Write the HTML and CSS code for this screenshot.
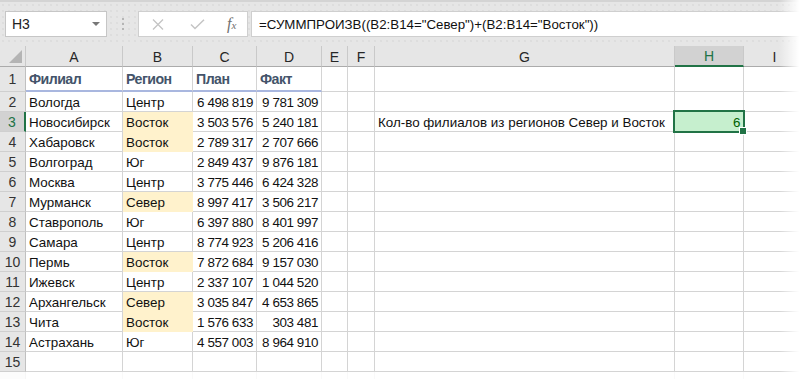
FILE: index.html
```html
<!DOCTYPE html>
<html lang="ru">
<head>
<meta charset="utf-8">
<title>Excel</title>
<link rel="stylesheet" href="styles.css">
</head>
<body>
<div class="app">
  <div class="toolbar">
    <div class="namebox"><span class="nb-text">H3</span><span class="nb-arrow"></span></div>
    <div class="sep"><i></i><i></i><i></i></div>
    <div class="btns">
      <svg class="ico-x" width="12" height="11" viewBox="0 0 12 11"><path d="M1 0.5 L11 10.5 M11 0.5 L1 10.5" stroke="#c4c4c4" stroke-width="1.3" fill="none"/></svg>
      <svg class="ico-ok" width="15" height="11" viewBox="0 0 15 11"><path d="M1 5.5 L5 9.5 L14 0.8" stroke="#c4c4c4" stroke-width="1.5" fill="none"/></svg>
      <span class="fx">f<small>x</small></span>
    </div>
    <div class="formula">=СУММПРОИЗВ((B2:B14="Север")+(B2:B14="Восток"))</div>
  </div>
  <div class="grid">
    <div class="ch corner"><span class="tri"></span></div>
    <div class="ch">A</div><div class="ch">B</div><div class="ch">C</div><div class="ch">D</div><div class="ch">E</div><div class="ch">F</div><div class="ch">G</div><div class="ch ch-sel">H</div><div class="ch">I</div>

    <div class="rh">1</div><div class="c hd">Филиал</div><div class="c hd">Регион</div><div class="c hd">План</div><div class="c hd">Факт</div><div class="c"></div><div class="c"></div><div class="c"></div><div class="c"></div><div class="c"></div>

    <div class="rh">2</div><div class="c">Вологда</div><div class="c">Центр</div><div class="c n">6 498 819</div><div class="c n">9 781 309</div><div class="c"></div><div class="c"></div><div class="c"></div><div class="c"></div><div class="c"></div>

    <div class="rh rh-sel">3</div><div class="c">Новосибирск</div><div class="c fill">Восток</div><div class="c n">3 503 576</div><div class="c n">5 240 181</div><div class="c"></div><div class="c"></div><div class="c">Кол-во филиалов из регионов Север и Восток</div><div class="c n active">6</div><div class="c"></div>

    <div class="rh">4</div><div class="c">Хабаровск</div><div class="c fill">Восток</div><div class="c n">2 789 317</div><div class="c n">2 707 666</div><div class="c"></div><div class="c"></div><div class="c"></div><div class="c"></div><div class="c"></div>

    <div class="rh">5</div><div class="c">Волгоград</div><div class="c">Юг</div><div class="c n">2 849 437</div><div class="c n">9 876 181</div><div class="c"></div><div class="c"></div><div class="c"></div><div class="c"></div><div class="c"></div>

    <div class="rh">6</div><div class="c">Москва</div><div class="c">Центр</div><div class="c n">3 775 446</div><div class="c n">6 424 328</div><div class="c"></div><div class="c"></div><div class="c"></div><div class="c"></div><div class="c"></div>

    <div class="rh">7</div><div class="c">Мурманск</div><div class="c fill">Север</div><div class="c n">8 997 417</div><div class="c n">3 506 217</div><div class="c"></div><div class="c"></div><div class="c"></div><div class="c"></div><div class="c"></div>

    <div class="rh">8</div><div class="c">Ставрополь</div><div class="c">Юг</div><div class="c n">6 397 880</div><div class="c n">8 401 997</div><div class="c"></div><div class="c"></div><div class="c"></div><div class="c"></div><div class="c"></div>

    <div class="rh">9</div><div class="c">Самара</div><div class="c">Центр</div><div class="c n">8 774 923</div><div class="c n">5 206 416</div><div class="c"></div><div class="c"></div><div class="c"></div><div class="c"></div><div class="c"></div>

    <div class="rh">10</div><div class="c">Пермь</div><div class="c fill">Восток</div><div class="c n">7 872 684</div><div class="c n">9 157 030</div><div class="c"></div><div class="c"></div><div class="c"></div><div class="c"></div><div class="c"></div>

    <div class="rh">11</div><div class="c">Ижевск</div><div class="c">Центр</div><div class="c n">2 337 107</div><div class="c n">1 044 520</div><div class="c"></div><div class="c"></div><div class="c"></div><div class="c"></div><div class="c"></div>

    <div class="rh">12</div><div class="c">Архангельск</div><div class="c fill">Север</div><div class="c n">3 035 847</div><div class="c n">4 653 865</div><div class="c"></div><div class="c"></div><div class="c"></div><div class="c"></div><div class="c"></div>

    <div class="rh">13</div><div class="c">Чита</div><div class="c fill">Восток</div><div class="c n">1 576 633</div><div class="c n">303 481</div><div class="c"></div><div class="c"></div><div class="c"></div><div class="c"></div><div class="c"></div>

    <div class="rh">14</div><div class="c">Астрахань</div><div class="c">Юг</div><div class="c n">4 557 003</div><div class="c n">8 964 910</div><div class="c"></div><div class="c"></div><div class="c"></div><div class="c"></div><div class="c"></div>

    <div class="rh">15</div><div class="c"></div><div class="c"></div><div class="c"></div><div class="c"></div><div class="c"></div><div class="c"></div><div class="c"></div><div class="c"></div><div class="c"></div>

    <div class="rh"></div><div class="c"></div><div class="c"></div><div class="c"></div><div class="c"></div><div class="c"></div><div class="c"></div><div class="c"></div><div class="c"></div><div class="c"></div>
  </div>
  <div class="fade-right"></div>
  <div class="fade-bottom"></div>
</div>
</body>
</html>
```
FILE: styles.css
```css
* { box-sizing: border-box; }
html, body { margin: 0; padding: 0; background: #fff; }
body { font-family: "Liberation Sans", Arial, sans-serif; color: #000; }

.app {
  position: relative;
  width: 806px;
  height: 379px;
  overflow: hidden;
  background: #fff;
}

.toolbar {
  height: 46px;
  display: flex;
  align-items: flex-start;
  padding-top: 9px;
  background-color: #e6e6e6;
  background-image: radial-gradient(circle, #d9d9d9 0.6px, transparent 0.9px);
  background-size: 6px 6px;
  border-top: 2px solid #d4d4d4;
}

.namebox {
  margin-left: 5px;
  width: 102px;
  height: 26px;
  background: #fff;
  border: 1px solid #c6c6c6;
  display: flex;
  align-items: center;
  justify-content: space-between;
  padding: 0 6px 0 6px;
  font-size: 14px;
  color: #222;
}
.nb-arrow {
  width: 0; height: 0;
  border-left: 4px solid transparent;
  border-right: 4px solid transparent;
  border-top: 4px solid #777;
}

.sep {
  width: 31px;
  height: 26px;
  display: flex;
  flex-direction: column;
  align-items: center;
  justify-content: center;
  gap: 3px;
}
.sep i { display: block; width: 2px; height: 2px; background: #b5b5b5; }

.btns {
  width: 110px;
  height: 26px;
  background: #fff;
  border: 1px solid #cfcfcf;
  display: flex;
  align-items: center;
  padding-left: 13px;
}
.ico-x { margin-right: 26px; }
.ico-ok { margin-right: 22px; }
.fx {
  font-family: "Liberation Serif", serif;
  font-style: italic;
  font-size: 16px;
  color: #707070;
  line-height: 1;
}
.fx small { font-size: 11px; }

.formula {
  margin-left: 3px;
  flex: 1;
  height: 26px;
  background: #fff;
  border: 1px solid #cfcfcf;
  border-right: none;
  padding-left: 7px;
  display: flex;
  align-items: center;
  font-size: 13.3px;
  color: #111;
  white-space: nowrap;
}

.grid {
  display: grid;
  grid-template-columns: 26px 97px 70px 64px 65px 26px 27px 300px 69px 62px;
  grid-template-rows: 21px 25px repeat(15, 20px) 20px;
  font-size: 13.4px;
}

.ch {
  background-color: #e6e6e6;
  border-right: 1px solid #c9c9c9;
  border-bottom: 1px solid #ababab;
  display: flex;
  align-items: center;
  justify-content: center;
  font-size: 14px;
  color: #262626;
  padding-top: 1px;
}
.corner { position: relative; }
.tri {
  position: absolute;
  right: 3px;
  bottom: 3px;
  width: 0; height: 0;
  border-left: 13px solid transparent;
  border-bottom: 13px solid #b4b4b4;
}
.ch-sel {
  background: #d2d2d2;
  color: #217346;
  border-bottom: 2px solid #217346;
}

.rh {
  background: #e6e6e6;
  border-right: 1px solid #c0c0c0;
  border-bottom: 1px solid #cfcfcf;
  display: flex;
  align-items: center;
  justify-content: center;
  font-size: 14px;
  color: #333;
}
.rh-sel {
  background: #d2d2d2;
  color: #217346;
  border-right: 2px solid #217346;
}

.c {
  border-right: 1px solid #d4d4d4;
  border-bottom: 1px solid #d4d4d4;
  display: flex;
  align-items: center;
  padding: 1px 3px 0 3px;
  white-space: nowrap;
  color: #111;
}
.c.n { justify-content: flex-end; letter-spacing: -0.4px; }
.c.hd {
  font-weight: bold;
  color: #44546a;
  font-size: 14.2px;
  letter-spacing: -0.55px;
  border-bottom: 2px solid #a9b7df;
}
.c.fill {
  background: #fff2cc;
  border-right-color: #fff2cc;
  border-bottom-color: #fff2cc;
}
.c.active {
  position: relative;
  background: #c6efce;
  color: #006100;
}
.c.active::before {
  content: "";
  position: absolute;
  left: -2px; top: -2px; right: -2px; bottom: -2px;
  border: 2px solid #217346;
}
.c.active::after {
  content: "";
  position: absolute;
  right: -4px; bottom: -4px;
  width: 6px; height: 6px;
  background: #217346;
  border: 1px solid #fff;
  box-sizing: content-box;
}

.fade-right {
  position: absolute;
  top: 0; right: 0;
  width: 27px;
  height: 100%;
  background: linear-gradient(to right, rgba(255,255,255,0), #fff 75%);
}
.fade-bottom {
  position: absolute;
  left: 0; right: 0;
  top: 372px;
  height: 7px;
  background: rgba(255,255,255,0.85);
}
```
